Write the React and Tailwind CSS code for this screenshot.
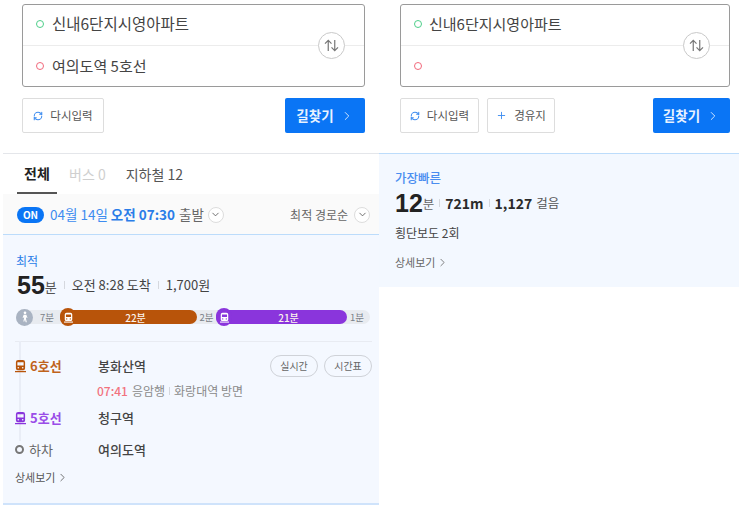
import React from "react";
import { ChevronDown, ChevronRight, Plus, RefreshCw } from "lucide-react";

const font = { fontFamily: '"Noto Sans CJK KR", "Noto Sans", sans-serif' };

const TrainIcon = ({ className }) => (
  <svg viewBox="0 0 12 14" className={className} fill="currentColor">
    <path d="M3.500 0.500h5a2.500 2.500 0 0 1 2.500 2.500v6.500a2 2 0 0 1-2 2H3a2 2 0 0 1-2-2V3A2.500 2.500 0 0 1 3.500 0.500zM2.600 3v3.400h6.800V3zM3.600 8a.9.9 0 1 0 0 1.800.9.9 0 0 0 0-1.800zM8.400 8a.9.9 0 1 0 0 1.800.9.9 0 0 0 0-1.800z" fillRule="evenodd" />
    <path d="M0 12.400h12v1.400H0z" />
  </svg>
);

const WalkIcon = () => (
  <svg viewBox="0 0 12 14" className="w-[10px] h-[12px]" fill="#ffffff">
    <circle cx="6" cy="2" r="1.600" />
    <path d="M4.400 4.200h3.200l1.400 3.600-1 .4-.8-1.600v2.400l1 4.400H6.800L6 9.800l-.8 2.600H4l.9-4V6.600l-.8 1.600-1-.4z" />
  </svg>
);

const SwapButton = () => (
  <div className="absolute top-[27px] right-[19px] w-[27px] h-[27px] rounded-full border border-[#c9c9c9] bg-white flex items-center justify-center">
    <svg viewBox="0 0 16 14" className="w-[15px] h-[13px]" fill="none" stroke="#777777" strokeWidth="1.300">
      <path d="M4.500 13V1.500M1 5l3.500-3.500L8 5" />
      <path d="M11.500 1v11.500M8 9l3.500 3.500L15 9" />
    </svg>
  </div>
);

const SearchBox = ({ width, origin, destination }) => (
  <div className={`relative h-[83px] rounded-[3px] border border-[#9a9a9a] bg-white ${width}`}>
    <div className="h-[41px] pb-[2px] flex items-center pl-[13px] border-b border-[#ececec]">
      <span className="w-[8px] h-[8px] rounded-full border-[1.5px] border-[#4fcf8a]" />
      <span className={origin}>신내6단지시영아파트</span>
    </div>
    <div className="h-[40px] flex items-center pl-[13px]">
      <span className="w-[8px] h-[8px] rounded-full border-[1.5px] border-[#f2697c]" />
      {destination && <span className="ml-[8px] text-[15px] text-[#444444]">{destination}</span>}
    </div>
    <SwapButton />
  </div>
);

const OutlineButton = ({ width, children }) => (
  <button className={`h-[35px] rounded-[2px] border border-[#dddddd] bg-white flex items-center justify-center gap-[7px] text-[11.500px] text-[#555555] ${width}`}>
    {children}
  </button>
);

const SearchButton = ({ width }) => (
  <button className={`h-[35px] rounded-[2px] bg-[#0a75f5] flex items-center justify-center gap-[6px] text-[13.500px] font-bold text-[#e8f2ff] ${width}`}>
    길찾기
    <ChevronRight className="w-[14px] h-[14px]" strokeWidth={1.5} />
  </button>
);

const Retry = () => (
  <>
    <RefreshCw className="w-[10px] h-[10px] text-[#3d8cf0]" strokeWidth={2.5} />
    다시입력
  </>
);

const SmallCircleChevron = () => (
  <span className="w-[16px] h-[16px] rounded-full border border-[#dddddd] bg-white flex items-center justify-center">
    <ChevronDown className="w-[11px] h-[11px] text-[#555555]" strokeWidth={1.8} />
  </span>
);

const Separator = ({ className }) => <span className={`block w-px h-[8px] bg-[#d5d8de] ${className}`} />;

const Segment = ({ width, bg, label }) => (
  <div className={`relative h-[14px] pl-[14px] rounded-full flex items-center justify-center text-[10px] font-medium text-[#fbf3ec] ${width} ${bg}`}>
    <span className={`absolute left-0 top-[-2px] w-[16px] h-[18px] rounded-full flex items-center justify-center text-white ${bg}`}>
      <TrainIcon className="w-[9px] h-[11px]" />
    </span>
    {label}
  </div>
);

const LeftPanel = () => (
  <div className="w-[379px] shrink-0 pl-[3px]">
    <div className="h-[154px] border-b border-[#e4e6ea] pt-[4px] pl-[19px]">
      <SearchBox width="w-[343px]" origin="ml-[8px] text-[15.500px] text-[#444444]" destination="여의도역 5호선" />
      <div className="w-[343px] mt-[11px] flex justify-between">
        <OutlineButton width="w-[82px]"><Retry /></OutlineButton>
        <SearchButton width="w-[80px]" />
      </div>
    </div>

    <div className="h-[40px] flex items-center bg-white pl-[14px] text-[14px]">
      <div className="w-[40px] h-[40px] flex items-center justify-center font-bold text-[#222222] border-b-2 border-[#555555]">전체</div>
      <span className="ml-[12px] text-[#cfcfcf]">버스 0</span>
      <span className="ml-[20px] text-[#555555]">지하철 12</span>
    </div>

    <div className="h-[41px] pt-[1px] bg-[#fafafa] border-b border-[#bcdcfb] flex items-center pl-[14px] pr-[9px]">
      <span className="w-[27px] h-[16px] rounded-full bg-[#0a75f5] flex items-center justify-center text-[10px] font-bold text-white">ON</span>
      <span className="ml-[6px] text-[13.500px] text-[#3d8cf0]">04월 14일 <b className="font-bold text-[#2a7de8]">오전 07:30</b></span>
      <span className="ml-[4px] text-[13.500px] text-[#666666]">출발</span>
      <span className="ml-[4px]"><SmallCircleChevron /></span>
      <span className="ml-auto mr-[6px] text-[12px] text-[#666666]">최적 경로순</span>
      <SmallCircleChevron />
    </div>

    <div className="relative h-[270px] bg-[#f4f8ff] border-b-2 border-[#cfe3fb] pt-[17px]">
      <div className="pl-[13px] text-[12px] leading-[18px] text-[#2a7de8]">최적</div>
      <div className="pl-[14px] mt-[1px] h-[28px] flex items-center text-[13px] text-[#444444]">
        <span className="font-['Liberation_Sans'] text-[25px] leading-[28px] font-bold text-[#222222]">55</span>
        <span className="text-[13px] text-[#555555] mt-[3px]">분</span>
        <Separator className="ml-[7px] mr-[7px]" />
        오전 8:28 도착
        <Separator className="ml-[7px] mr-[7px]" />
        1,700원
      </div>

      <div className="ml-[13px] mr-[9px] mt-[11px] h-[14px] rounded-full bg-[#e8ebf0] flex items-center text-[9.500px] text-[#7a7f88]">
        <span className="w-[17px] h-[17px] rounded-full bg-[#a9b3c2] flex items-center justify-center"><WalkIcon /></span>
        <span className="ml-[7px] w-[20px]">7분</span>
        <Segment width="w-[137px]" bg="bg-[#b8540a]" label="22분" />
        <span className="w-[19px] text-center">2분</span>
        <Segment width="w-[131px]" bg="bg-[#8a35dc]" label="21분" />
        <span className="ml-[3px]">1분</span>
      </div>

      <div className="ml-[12px] mr-[7px] mt-[17px] border-t border-[#e8ebf2] pt-[13px]">
        <span className="absolute left-[16px] top-[106px] w-[2px] h-[100px] bg-[#e9edf6]" />

        <div className="relative h-[21px] flex items-center text-[13px]">
          <TrainIcon className="w-[11px] h-[14px] text-[#b8540a]" />
          <span className="ml-[4px] w-[68px] font-bold text-[#c0631c]">6호선</span>
          <span className="font-medium text-[#444444]">봉화산역</span>
          <div className="ml-auto flex gap-[6px]">
            <span className="w-[48px] h-[22px] rounded-full border border-[#cfd2d8] flex items-center justify-center text-[10px] text-[#666666]">실시간</span>
            <span className="w-[48px] h-[22px] rounded-full border border-[#cfd2d8] flex items-center justify-center text-[10px] text-[#666666]">시간표</span>
          </div>
        </div>

        <div className="relative mt-[6px] h-[18px] pl-[82px] flex items-center text-[12px] text-[#8a8a8a]">
          <span className="font-medium text-[#f2727e]">07:41</span>
          <span className="ml-[4px]">응암행</span>
          <Separator className="mx-[4px]" />
          화랑대역 방면
        </div>

        <div className="relative mt-[7px] h-[21px] flex items-center text-[13px]">
          <TrainIcon className="w-[11px] h-[14px] text-[#8a35dc]" />
          <span className="ml-[4px] w-[68px] font-bold text-[#9a4de8]">5호선</span>
          <span className="font-medium text-[#444444]">청구역</span>
        </div>

        <div className="relative mt-[11px] h-[21px] flex items-center text-[13px]">
          <span className="w-[9px] h-[9px] rounded-full border-2 border-[#777777] bg-[#f4f8ff]" />
          <span className="ml-[5px] w-[69px] text-[#666666]">하차</span>
          <span className="font-medium text-[#444444]">여의도역</span>
        </div>

        <div className="mt-[8px] h-[18px] flex items-center gap-[1px] text-[11px] text-[#555555]">
          상세보기
          <ChevronRight className="w-[13px] h-[13px]" strokeWidth={1.5} />
        </div>
      </div>
    </div>
  </div>
);

const RightPanel = () => (
  <div className="flex-1">
    <div className="h-[153px] pt-[4px] pl-[21px]">
      <SearchBox width="w-[330px]" origin="ml-[7px] text-[15px] text-[#444444]" />
      <div className="w-[330px] mt-[11px] flex">
        <OutlineButton width="w-[79px]"><Retry /></OutlineButton>
        <div className="ml-[8px]">
          <OutlineButton width="w-[68px]">
            <Plus className="w-[11px] h-[11px] text-[#3d8cf0]" strokeWidth={2} />
            경유지
          </OutlineButton>
        </div>
        <div className="ml-auto"><SearchButton width="w-[77px]" /></div>
      </div>
    </div>

    <div className="h-[134px] bg-[#f3f8ff] border-t border-[#bcdcfb] pt-[15px] pl-[16px]">
      <div className="text-[12.500px] leading-[18px] font-medium text-[#4a8df0]">가장빠른</div>
      <div className="mt-[1px] h-[30px] flex items-center text-[14px] font-bold text-[#2b2b2b]">
        <span className="font-['Liberation_Sans'] text-[25px] leading-[30px] text-[#222222]">12</span>
        <span className="text-[12.500px] font-normal text-[#666666] mt-[3px]">분</span>
        <Separator className="mx-[5px]" />
        721m
        <Separator className="mx-[5px]" />
        1,127
        <span className="ml-[4px] text-[12.500px] font-normal text-[#555555]">걸음</span>
      </div>
      <div className="mt-[6px] text-[12px] leading-[18px] text-[#444444]">횡단보도 2회</div>
      <div className="mt-[11px] h-[18px] flex items-center gap-[1px] text-[11px] text-[#666666]">
        상세보기
        <ChevronRight className="w-[13px] h-[13px]" strokeWidth={1.5} />
      </div>
    </div>
  </div>
);

export default function App() {
  return (
    <div className="w-[739px] h-[505px] overflow-hidden bg-white flex" style={font}>
      <LeftPanel />
      <RightPanel />
    </div>
  );
}
